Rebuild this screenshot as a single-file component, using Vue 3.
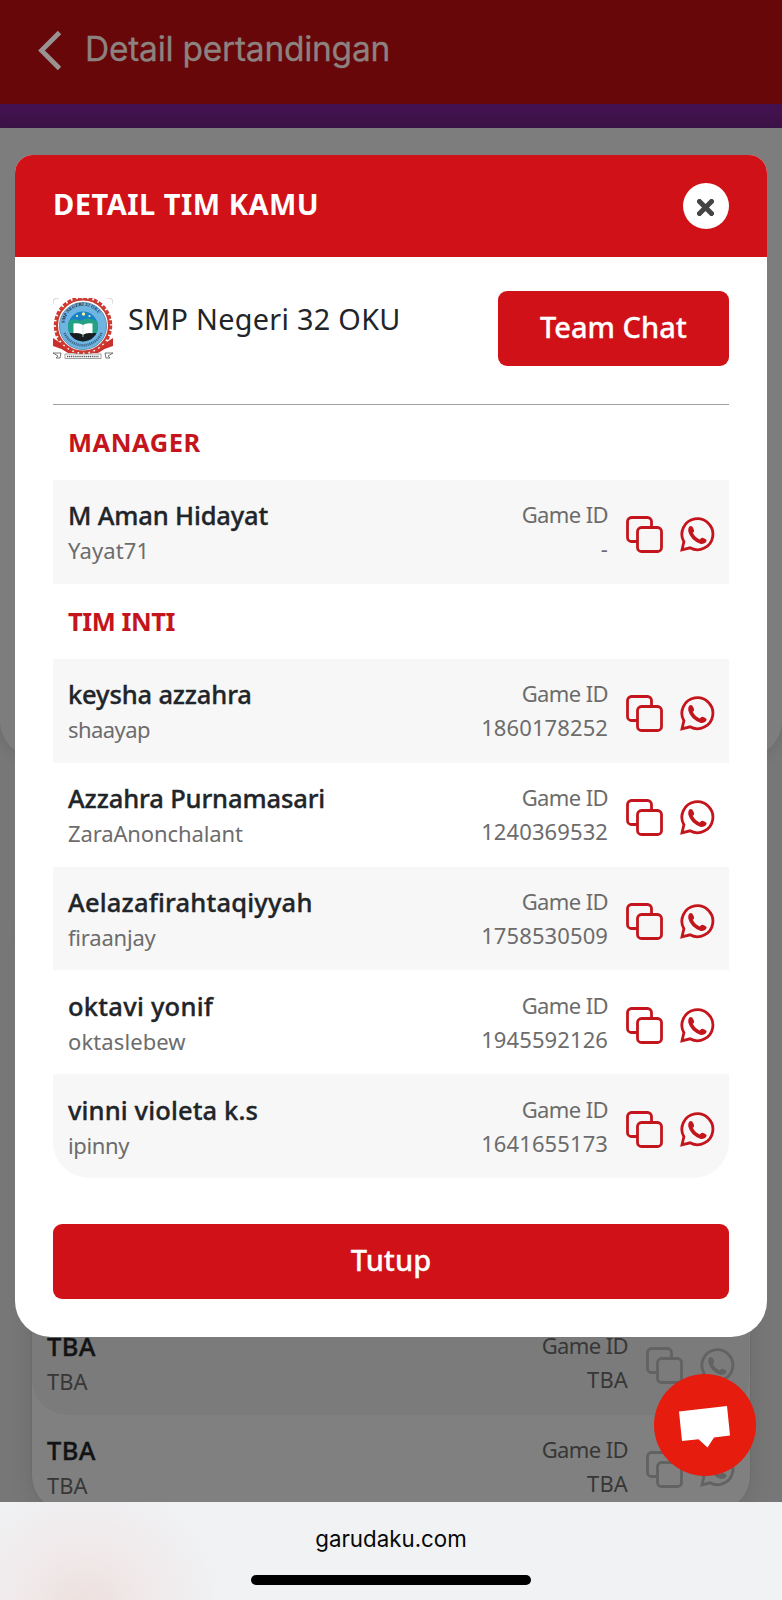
<script setup>
const manager = { name: 'M Aman Hidayat', nick: 'Yayat71', id: '-', nameTrack: -0.15, nickTrack: 0.1 }
const players = [
  { name: 'keysha azzahra', nick: 'shaayap', id: '1860178252', nameTrack: -0.15, nickTrack: -0.55 },
  { name: 'Azzahra Purnamasari', nick: 'ZaraAnonchalant', id: '1240369532', nameTrack: -0.12, nickTrack: -0.12 },
  { name: 'Aelazafirahtaqiyyah', nick: 'firaanjay', id: '1758530509', nameTrack: 0.19, nickTrack: -0.2 },
  { name: 'oktavi yonif', nick: 'oktaslebew', id: '1945592126', nameTrack: 0.25, nickTrack: 0.1 },
  { name: 'vinni violeta k.s', nick: 'ipinny', id: '1641655173', nameTrack: 0.13, nickTrack: -0.35 },
]
const sections = [
  { title: 'MANAGER', rows: [manager], track: 0.55 },
  { title: 'TIM INTI', rows: players, track: -0.45 },
]
const placeholders = [
  { name: 'TBA', nick: 'TBA', id: 'TBA' },
  { name: 'TBA', nick: 'TBA', id: 'TBA' },
]
const track = (v = 0) => ({ letterSpacing: `${v}px` })
</script>

<template>
  <div class="screen">
    <header class="topbar">
      <svg class="back" width="28" height="42" viewBox="0 0 28 42">
        <path d="M24.500 3.500 6.500 21.500 24.500 39.500" fill="none" stroke="currentColor" stroke-width="4.800" />
      </svg>
      <span>Detail pertandingan</span>
    </header>
    <div class="strip"></div>
    <div class="upper-card"></div>

    <div class="lower-card">
      <div v-for="(p, i) in placeholders" :key="i" class="row" :class="{ tinted: i === 0 }">
        <div class="who">
          <div class="name">{{ p.name }}</div>
          <div class="nick">{{ p.nick }}</div>
        </div>
        <div class="game">
          <div class="label">Game ID</div>
          <div class="gid">{{ p.id }}</div>
        </div>
        <svg class="copy" viewBox="0 0 37 37"><path d="M10.500 25.500H5.500a4 4 0 0 1-4-4V5.500a4 4 0 0 1 4-4h16a4 4 0 0 1 4 4v6M15.500 11.500h16a4 4 0 0 1 4 4v16a4 4 0 0 1-4 4h-16a4 4 0 0 1-4-4v-16a4 4 0 0 1 4-4z" /></svg>
        <svg class="wa" viewBox="0 0 35 35"><path class="ring" d="M2 32.800 3.900 24.800A15.500 15.500 0 1 1 10 30.800z" /><path class="phone" d="M9 10q1.600-1.900 3.200-.4 1.500 2 1.900 3.800.2 1.200-1.300 2.300 2.200 4.700 7 6.800 1.300-2 2.700-1.800 2 .4 3.600 1.800 1.300 1.300-.4 2.900-2.200 2-5.500 1.300Q10.500 23 8.300 14.500 7.800 12 9 10z" /></svg>
      </div>
    </div>

    <section class="modal">
      <div class="modal-head">
        <h2>DETAIL TIM KAMU</h2>
        <button class="close" aria-label="Tutup">
          <svg width="17" height="17" viewBox="0 0 17 17"><path d="m2.500 2.500 12 12M14.500 2.500l-12 12" stroke="#444" stroke-width="5" stroke-linecap="square" stroke-linejoin="round" /></svg>
        </button>
      </div>
      <div class="modal-body">
        <div class="team">
          <svg class="crest" width="60" height="61" viewBox="0 0 60 61">
            <defs>
              <path id="crest-top" d="M13.200 34A18.500 18.500 0 1 1 46.800 34" />
              <clipPath id="crest-disc"><circle cx="30" cy="28.500" r="15" /></clipPath>
            </defs>
            <path d="M0 6V4Q0 0 6 0M60 6V4Q60 0 54 0" fill="none" stroke="#bbb" stroke-width=".8" />
            <path d="M0 40Q12 48 18 51H42Q48 48 60 40V48Q52 50 45 55H15Q8 50 0 48z" fill="#c92f2b" />
            <circle cx="30" cy="27.500" r="28.300" fill="#fff" />
            <circle cx="30" cy="27.500" r="27.500" fill="none" stroke="#d13a2f" stroke-width="3.500" stroke-dasharray="3.800 1.600" />
            <circle cx="30" cy="27.500" r="26" fill="#fff" stroke="#c83b32" stroke-width="2" />
            <circle cx="30" cy="28" r="23.600" fill="#6eb5e2" stroke="#5580a5" stroke-width=".8" />
            <g clip-path="url(#crest-disc)">
              <path fill="#1780c7" d="M14 12h32v34H14z" />
              <path fill="#24a184" d="M14 24q8-5 13-1l4-2q9-2 16 5v12H14z" />
              <path fill="#171d20" d="M14 35h32v12H14z" />
            </g>
            <path d="M20.500 25.500q6-1 9.500 1.500 3.500-2.500 9.500-1.500v9.800q-6-.8-9.500 1.500-3.500-2.300-9.500-1.500z" fill="#fff" />
            <path d="M30 27v12" stroke="#d6e0df" stroke-width=".8" />
            <g fill="#e9f3a1"><circle cx="24" cy="18" r="1.100" /><circle cx="30.500" cy="16" r="1.700" /><circle cx="36.500" cy="18" r="1.100" /></g>
            <text class="crest-text"><textPath href="#crest-top" startOffset="9">SMP NEGERI 32 OKU</textPath></text>
            <path d="M11.500 35Q16 46 30 47.500 44 46 48.500 35" fill="none" stroke="#395f80" stroke-width="2.600" stroke-dasharray="1.100 .9" />
            <path d="M0 55h8l-1 5H3l2-2zM60 55h-8l1 5h4l-2-2z" fill="#fff" stroke="#555" stroke-width=".8" />
            <path d="M12 56h36v4.500H12z" fill="#fff" stroke="#777" stroke-width=".7" />
            <path d="M14 58.500h32" stroke="#555" stroke-width="1.500" stroke-dasharray="1.200 .7" />
          </svg>
          <span class="team-name">SMP Negeri 32 OKU</span>
          <button class="btn chat">Team Chat</button>
        </div>
        <div class="roster">
          <template v-for="s in sections" :key="s.title">
            <h3 :style="track(s.track)">{{ s.title }}</h3>
            <div v-for="(p, i) in s.rows" :key="p.name" class="row" :class="{ tinted: i % 2 === 0 }">
              <div class="who">
                <div class="name" :style="track(p.nameTrack)">{{ p.name }}</div>
                <div class="nick" :style="track(p.nickTrack)">{{ p.nick }}</div>
              </div>
              <div class="game">
                <div class="label">Game ID</div>
                <div class="gid">{{ p.id }}</div>
              </div>
              <svg class="copy" viewBox="0 0 37 37"><path d="M10.500 25.500H5.500a4 4 0 0 1-4-4V5.500a4 4 0 0 1 4-4h16a4 4 0 0 1 4 4v6M15.500 11.500h16a4 4 0 0 1 4 4v16a4 4 0 0 1-4 4h-16a4 4 0 0 1-4-4v-16a4 4 0 0 1 4-4z" /></svg>
              <svg class="wa" viewBox="0 0 35 35"><path class="ring" d="M2 32.800 3.900 24.800A15.500 15.500 0 1 1 10 30.800z" /><path class="phone" d="M9 10q1.600-1.900 3.200-.4 1.500 2 1.900 3.800.2 1.200-1.300 2.300 2.200 4.700 7 6.800 1.300-2 2.700-1.800 2 .4 3.600 1.800 1.300 1.300-.4 2.900-2.200 2-5.500 1.300Q10.500 23 8.300 14.500 7.800 12 9 10z" /></svg>
            </div>
          </template>
        </div>
        <button class="btn dismiss">Tutup</button>
      </div>
    </section>

    <button class="fab" aria-label="Chat">
      <svg width="102" height="102" viewBox="0 0 102 102"><path d="M25 37.500 73 32l3 29.500-16 2-6.500 10-9-8.300L28 67z" fill="#fff" /></svg>
    </button>

    <footer class="browser">
      <span>garudaku.com</span>
      <i></i>
    </footer>
  </div>
</template>

<style>
body { margin: 0; }
</style>

<style scoped>
.screen {
  position: relative;
  width: 782px;
  height: 1600px;
  overflow: hidden;
  background: #777;
  font-family: "Noto Sans", "Open Sans", sans-serif;
  color: #212529;
}
button { border: 0; padding: 0; font-family: inherit; }
h2, h3 { margin: 0; }
.topbar {
  height: 104px;
  box-sizing: border-box;
  padding: 0 0 6px 35px;
  display: flex;
  align-items: center;
  gap: 22px;
  background: #670709;
  color: #8c8380;
  font: 400 33.500px/40px Inter, sans-serif;
  letter-spacing: -.25px;
  -webkit-text-stroke: .3px currentColor;
}
.back { color: #999392; margin-top: 1px; }
.strip { height: 24px; background: linear-gradient(#43104f, #3e1449); }
.upper-card {
  height: 629px;
  border-radius: 0 0 36px 36px;
  background: #7d7d7d;
  box-shadow: 0 0 16px rgba(0, 0, 0, .12);
}
.lower-card {
  position: absolute;
  left: 31px;
  top: 900px;
  width: 720px;
  height: 612px;
  box-sizing: border-box;
  padding: 410px 1px 0 0;
  border: 1px solid #6c6c6c;
  border-radius: 36px;
  background: #808080;
  box-shadow: 0 0 24px rgba(0, 0, 0, .1);
}
.modal {
  position: absolute;
  left: 15px;
  top: 155px;
  width: 752px;
  height: 1182px;
  border-radius: 18px 18px 36px 36px;
  overflow: hidden;
  background: #fff;
}
.modal-head {
  height: 101.500px;
  display: flex;
  align-items: center;
  justify-content: space-between;
  padding: 0 38px;
  background: #d11118;
  color: #fff;
}
.modal-head h2 { font-size: 29px; font-weight: 700; line-height: 40px; letter-spacing: .5px; padding-bottom: 4px; }
.close {
  width: 46px;
  height: 46px;
  border-radius: 50%;
  background: #fff;
  display: flex;
  align-items: center;
  justify-content: center;
}
.close svg { margin: 3px 1px 0 0; }
.modal-body { padding: 0 38px; }
.team {
  display: flex;
  align-items: flex-start;
  box-sizing: border-box;
  height: 148px;
  padding-top: 34.500px;
  border-bottom: 1px solid #a0a0a0;
}
.crest { margin-top: 7px; }
.crest-text { font: 700 4.600px "Liberation Serif", serif; fill: #16283c; }
.team-name { margin: 6px 0 0 15px; font-size: 28.800px; line-height: 44px; letter-spacing: .3px; }
.btn { height: 75px; border-radius: 9px; background: #d11118; color: #fff; font-size: 29px; font-weight: 500; padding-bottom: 4px; -webkit-text-stroke: .3px currentColor; }
.chat { width: 231px; margin-left: auto; }
.dismiss { width: 100%; margin-top: 45.500px; display: block; }
.roster { border-radius: 0 0 36px 36px; overflow: hidden; }
h3 {
  height: 75.300px;
  padding-left: 15px;
  color: #c4151c;
  font-size: 25.500px;
  line-height: 75px;
  font-weight: 700;
}
.row {
  height: 103.850px;
  box-sizing: border-box;
  padding: 0 14.500px 0 15px;
  display: flex;
  align-items: center;
}
.tinted { background: #f7f7f7; }
.who { flex: 1; padding-top: 1px; }
.name { font-size: 25.500px; font-weight: 500; line-height: 36px; -webkit-text-stroke: .35px currentColor; }
.nick { font-size: 22px; line-height: 34px; color: #6c6c6c; }
.game { text-align: right; font-size: 22px; line-height: 34px; color: #6c6c6c; margin-right: 17.500px; padding-bottom: 1px; }
.label { letter-spacing: -.6px; }
.gid { letter-spacing: .1px; }
.copy, .wa { fill: none; stroke: #c4151c; stroke-width: 2.800; }
.copy { width: 37px; height: 37px; margin: 6px 17px 0 0; }
.wa { width: 35px; height: 35px; margin-top: 6px; }
.phone { fill: #c4151c; stroke: none; }
.lower-card .tinted { background: #7b7b7b; border-radius: 0 0 36px 36px; }
.lower-card .name { color: #111314; letter-spacing: .4px; }
.lower-card .nick, .lower-card .game { color: #373737; }
.lower-card .copy, .lower-card .wa { stroke: #626262; }
.lower-card .phone { fill: #626262; }
.fab {
  position: absolute;
  left: 653.500px;
  top: 1373.500px;
  width: 102px;
  height: 102px;
  border-radius: 50%;
  background: #e51c0e;
}
.fab svg { display: block; }
.browser {
  position: absolute;
  left: 0;
  right: 0;
  bottom: 0;
  height: 98px;
  background: radial-gradient(circle at 85px 110px, rgba(237, 220, 219, .9), rgba(240, 229, 229, .7) 60px, rgba(240, 242, 244, 0) 140px), #f0f2f4;
  text-align: center;
  color: #080808;
  font: 400 22.300px/28px Inter, sans-serif;
}
.browser span { display: block; padding-top: 23px; }
.browser i {
  display: block;
  width: 280px;
  height: 10px;
  margin: 22px auto 0;
  border-radius: 5px;
  background: #000;
}
</style>
